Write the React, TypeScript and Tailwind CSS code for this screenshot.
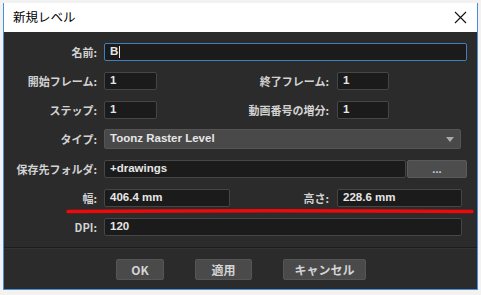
import React from 'react';

const jp = "font-['Noto_Sans_CJK_JP','Liberation_Sans',sans-serif]";
const latin = "font-['Liberation_Sans','Noto_Sans_CJK_JP',sans-serif]";

const Label: React.FC<{ text: string; className?: string }> = ({ text, className = 'w-[93px]' }) => (
  <div className={`${className} shrink-0 text-right text-[11px] font-bold leading-none text-[#d2d2d2] ${jp}`}>
    {text}:
  </div>
);

const Field: React.FC<{ value: string; className: string; focused?: boolean }> = ({ value, className, focused }) => (
  <div
    className={`${className} h-[18px] shrink-0 rounded-[2px] border bg-[#1b1b1b] pl-[5px] flex items-center text-[11.5px] font-bold text-[#e6e6e6] ${latin} ${
      focused ? 'border-[#3f7fbf]' : 'border-[#464646]'
    }`}
  >
    {value}
    {focused && <span className="ml-[1px] h-[12px] w-px bg-[#e6e6e6]" />}
  </div>
);

const Btn: React.FC<{ text: string; className: string }> = ({ text, className }) => (
  <button
    className={`${className} h-[21px] rounded-[2px] border border-[#555] bg-[#4a4a4a] text-[12px] font-bold text-[#d4d4d4] ${jp} flex items-center justify-center`}
  >
    {text}
  </button>
);

export default function App() {
  return (
    <div className="relative h-[295px] w-[481px] overflow-hidden bg-[#f2f2f2]">
      <div className="ml-[3px] mt-[3px] w-[475px] border-x border-b border-[#4a8fd4]">
        {/* タイトルバー */}
        <div className="flex h-[29px] items-center justify-between bg-white pl-[9px] pr-[9px]">
          <span className={`text-[12.5px] text-black ${jp}`}>新規レベル</span>
          <svg width="13" height="13" viewBox="0 0 13 13" className="mr-[1px]">
            <path d="M1 1 L12 12 M12 1 L1 12" stroke="#111" strokeWidth="1.1" />
          </svg>
        </div>

        {/* 本体 */}
        <div className="flex h-[257px] flex-col bg-[#2b2b2b] pt-[11px]">
          <div className="flex flex-col gap-[11px]">
            <div className="flex h-[18px] items-center gap-[7px]">
              <Label text="名前" />
              <Field value="B" className="w-[363px]" focused />
            </div>
            <div className="flex h-[18px] items-center">
              <Label text="開始フレーム" />
              <Field value="1" className="ml-[7px] w-[53px]" />
              <Label text="終了フレーム" className="w-[172px]" />
              <Field value="1" className="ml-[8px] w-[52px]" />
            </div>
            <div className="flex h-[18px] items-center">
              <Label text="ステップ" />
              <Field value="1" className="ml-[7px] w-[53px]" />
              <Label text="動画番号の増分" className="w-[172px]" />
              <Field value="1" className="ml-[8px] w-[52px]" />
            </div>
            <div className="flex h-[20px] items-center gap-[7px] -mt-px">
              <Label text="タイプ" />
              <div
                className={`flex h-[20px] w-[357px] items-center justify-between rounded-[2px] border border-[#555] bg-[#494949] pl-[5px] pr-[6px] text-[11.5px] font-bold text-[#e6e6e6] ${latin}`}
              >
                Toonz Raster Level
                <svg width="8" height="5" viewBox="0 0 8 5">
                  <path d="M0 0 H8 L4 5 Z" fill="#a9a9a9" />
                </svg>
              </div>
            </div>
            <div className="flex h-[18px] items-center">
              <Label text="保存先フォルダ" />
              <Field value="+drawings" className="ml-[7px] w-[302px]" />
              <button className="ml-[1px] flex h-[18px] w-[60px] items-end justify-center rounded-[2px] border border-[#5a5a5a] bg-[#4d4d4d] pb-[3px] text-[11px] font-bold leading-none text-[#c8d4e0]">
                ...
              </button>
            </div>
            <div className="flex h-[18px] items-center">
              <Label text="幅" />
              <Field value="406.4 mm" className="ml-[7px] w-[126px]" />
              <Label text="高さ" className="w-[99px]" />
              <Field value="228.6 mm" className="ml-[8px] w-[125px]" />
            </div>
            <div className="flex h-[18px] items-center gap-[7px]">
              <Label text="DPI" />
              <Field value="120" className="w-[358px]" />
            </div>
          </div>

          <div className="mt-[11px] h-px bg-[#1c1c1c]" />
          <div className="h-px bg-[#333]" />

          <div className="flex pt-[10px]">
            <Btn text="OK" className="ml-[112px] w-[48px]" />
            <Btn text="適用" className="ml-[31px] w-[57px]" />
            <Btn text="キャンセル" className="ml-[31px] w-[83px]" />
          </div>
        </div>
      </div>

      {/* 赤い注釈線 */}
      <svg className="absolute left-0 top-0" width="481" height="295" viewBox="0 0 481 295">
        <path d="M68 211.5 Q270 210 472 211.5" stroke="#ee0a0a" strokeWidth="3.5" strokeLinecap="round" fill="none" />
      </svg>
    </div>
  );
}
